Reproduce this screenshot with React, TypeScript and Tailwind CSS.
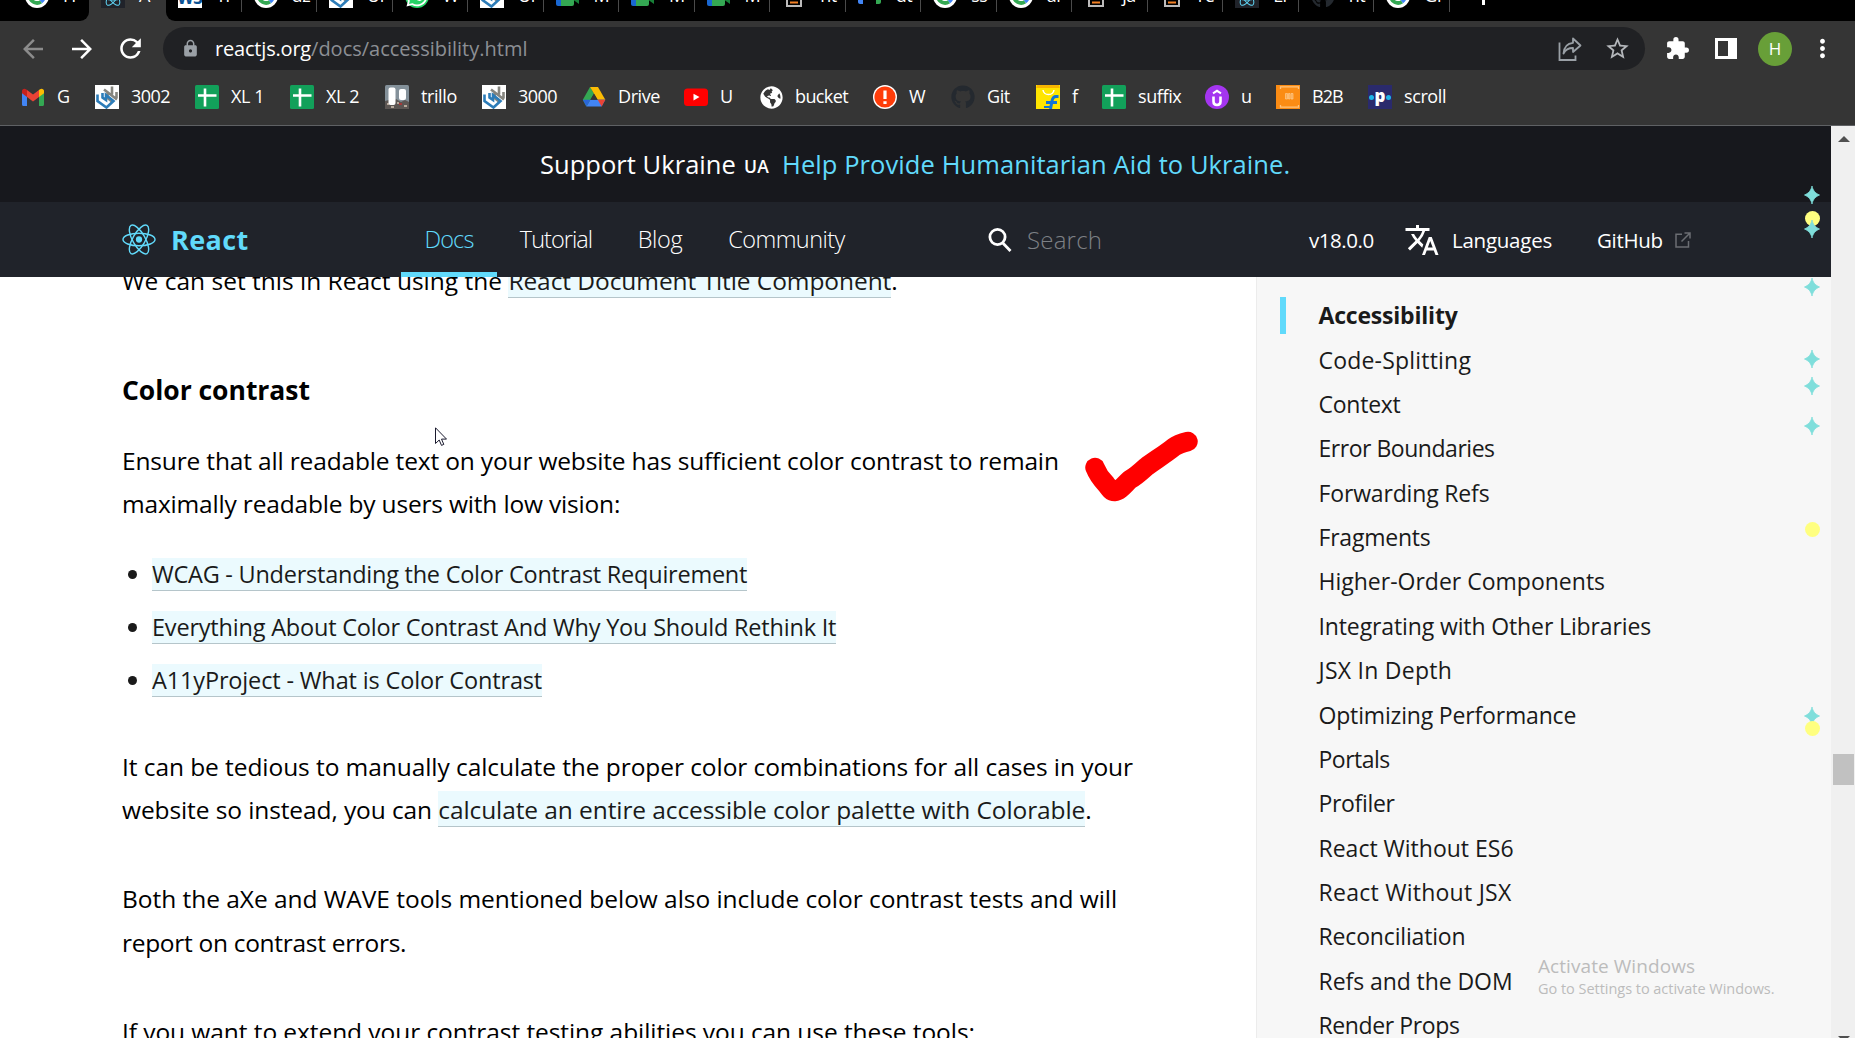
import type { ReactNode } from "react";
import {
  MdArrowBack,
  MdArrowForward,
  MdExtension,
  MdLock,
  MdMoreVert,
  MdRefresh,
  MdStarBorder,
  MdTranslate,
} from "react-icons/md";
import { FaGithub, FaGlobeAmericas, FaWhatsapp } from "react-icons/fa";

/* ---------- icons ---------- */

function ReactLogo({ className }: { className?: string }) {
  return (
    <svg viewBox="-12 -10.8 24 21.6" preserveAspectRatio="none" className={className} fill="none" stroke="#61dafb">
      <circle r="2.2" fill="#61dafb" stroke="none" />
      <ellipse rx="11.3" ry="4.4" strokeWidth="1" />
      <ellipse rx="11.3" ry="4.4" strokeWidth="1" transform="rotate(60)" />
      <ellipse rx="11.3" ry="4.4" strokeWidth="1" transform="rotate(120)" />
    </svg>
  );
}

function GmailIcon() {
  return (
    <svg viewBox="0 0 24 24" className="size-6">
      <path d="M1 7v12.5c0 .8.6 1.5 1.4 1.5H6V10.500z" fill="#4285f4" />
      <path d="M18 10.500V21h3.600c.8 0 1.400-.7 1.400-1.500V7z" fill="#34a853" />
      <path d="M18 5v7l5-3.800V6c0-2-2.300-3-4-1.800z" fill="#fbbc04" />
      <path d="M6 12V5l6 4.500L18 5v7l-6 4.500z" fill="#ea4335" />
      <path d="M1 6v2.200L6 12V5L5 4.200C3.300 3 1 4 1 6z" fill="#c5221f" />
    </svg>
  );
}

function InterlockIcon() {
  return (
    <svg viewBox="0 0 24 24" className="size-6 bg-white" fill="none" strokeWidth="2.600">
      <path d="M9 4.500 22 14.500M17 1.500v8M12.500 7.500v5.500l5 4M21.500 7v6" stroke="#85857f" />
      <path d="M2.500 9.500v6.500l9 6.500 7-6.500-7.500-6V15l-3.500-2.500V8" stroke="#2c7cb8" />
    </svg>
  );
}

function SheetIcon() {
  return (
    <svg viewBox="0 0 24 24" className="size-6">
      <rect width="24" height="24" rx="1.500" fill="#12a05a" />
      <path d="M10 3.500v18M3 10.500h18.500" stroke="#fff" strokeWidth="2.600" />
    </svg>
  );
}

function TrelloIcon() {
  return (
    <svg viewBox="0 0 24 24" className="size-6">
      <rect width="24" height="24" rx="1.500" fill="#84919a" />
      <path d="M0 16l4-1 3 3 4-4 5 3 4-2 4 2v7H0z" fill="#5c5653" />
      <path d="M2 19h2M6 22h3M12 18h2M19 21h3" stroke="#b7a99b" strokeWidth="2" />
      <path d="M14 19h3" stroke="#a33a3a" strokeWidth="2" />
      <rect x="3.500" y="2.500" width="7" height="17.500" rx="2" fill="#fff" />
      <rect x="14" y="4" width="7" height="11" rx="2" fill="#fff" />
    </svg>
  );
}

function DriveIcon() {
  return (
    <svg viewBox="0 0 24 24" className="size-6">
      <path d="M8 2 .8 14.800 4.400 21.500 12 8.600z" fill="#34a853" />
      <path d="M8 2h8l7.300 12.800h-7.600z" fill="#fbbc04" />
      <path d="M8.300 14.800h15L19.600 21.500H4.400z" fill="#4285f4" />
      <path d="M15.700 14.800h7.600L19.600 21.500z" fill="#ea4335" />
      <path d="M.8 14.800h7.500L4.400 21.500z" fill="#2a66d9" />
      <path d="M12 8.800l3.600 6H8.400z" fill="#353535" />
    </svg>
  );
}

function YouTubeIcon() {
  return (
    <svg viewBox="0 0 24 24" className="size-6">
      <rect y="3.500" width="24" height="17.500" rx="3.500" fill="#f00" />
      <path d="M9.500 8.800v6.600l6-3.300z" fill="#fff" />
    </svg>
  );
}

function AlertIcon() {
  return (
    <svg viewBox="0 0 24 24" className="size-6">
      <circle cx="12" cy="12" r="12" fill="#fff" />
      <circle cx="12" cy="12" r="10.600" fill="#ff3d0a" />
      <path d="M12 5.500v8.500M12 16.200v2.800" stroke="#fff" strokeWidth="3.200" />
    </svg>
  );
}

function ShopIcon() {
  return (
    <svg viewBox="0 0 24 24" className="size-6">
      <path d="M0 0h24v24H0z" fill="#ffe500" />
      <path d="M1 0h22l.8 3H.2z" fill="#f7b500" />
      <path d="M7 5c1 6 10 6 11 0" fill="none" stroke="#fff" strokeWidth="1.500" />
      <path d="M22.500 11.500H20c-2.500 0-3.500 2-4 4.500L14.500 24M10 17.500h11" fill="none" stroke="#1273d6" strokeWidth="3" />
      <path d="M8 22h6" stroke="#1273d6" strokeWidth="2" />
    </svg>
  );
}

function PurpleIcon() {
  return (
    <svg viewBox="0 0 24 24" className="size-6">
      <circle cx="12" cy="12" r="12" fill="#a435f0" />
      <path d="M8.500 11.500v5c0 4.600 7 4.600 7 0v-5" fill="none" stroke="#fff" strokeWidth="2.600" />
      <path d="M8 8.300 12 5.800l4 2.500" fill="none" stroke="#fff" strokeWidth="2" />
    </svg>
  );
}

function B2BIcon() {
  return (
    <svg viewBox="0 0 24 24" className="size-6">
      <rect width="24" height="24" fill="#fb8c14" />
      <path d="M4.500 4V1.800h18V4M4.500 20v2.200h18V20" fill="none" stroke="#ffc37d" strokeWidth="1.300" />
      <path d="M9.500 8.500h2v5.500h-2zM12.500 8.500h1.500v5.500h-1.500zM15 8.500h2v5.500h-2z" fill="#fda94e" stroke="#fed3a0" strokeWidth=".6" />
    </svg>
  );
}

function PIcon() {
  return (
    <span className="flex size-6 items-center justify-center gap-px bg-[#2a2a6c] font-bold text-white">
      <i className="size-[5px] rounded-full bg-[#1fb6e8]" />
      <b className="-mt-1 text-[17px] leading-none">p</b>
      <i className="size-[5px] rounded-full bg-[#1fb6e8]" />
    </span>
  );
}

function GoogleIcon() {
  return (
    <svg viewBox="0 0 24 24" className="size-6">
      <circle cx="12" cy="12" r="12" fill="#fff" />
      <path d="M5 12a7 7 0 0 0 11 5.700" fill="none" stroke="#34a853" strokeWidth="3.800" />
      <path d="M16 17.700A7 7 0 0 0 19 12h-7" fill="none" stroke="#4285f4" strokeWidth="3.800" />
    </svg>
  );
}

function MeetIcon() {
  return (
    <svg viewBox="0 0 24 24" className="size-6">
      <path d="M0 12h6v10H2a2 2 0 0 1-2-2z" fill="#1967d2" />
      <path d="M5 14h13v6a2 2 0 0 1-2 2H5z" fill="#34a853" />
      <path d="M16 12l7-3v11l-7-5z" fill="#188038" />
    </svg>
  );
}

function StackIcon() {
  return (
    <svg viewBox="0 0 24 24" className="size-6">
      <path d="M5 13v9h14v-9" fill="none" stroke="#bcbbbb" strokeWidth="2" />
      <path d="M8 18.500h8M8 14.500h8" stroke="#f48024" strokeWidth="2" />
    </svg>
  );
}

function GreenBlueIcon() {
  return (
    <svg viewBox="0 0 24 24" className="size-6">
      <path d="M0 8h5v12H2c-1 0-2-1-2-2z" fill="#4285f4" />
      <path d="M18 8h5v10c0 1-1 2-2 2h-3z" fill="#34a853" />
    </svg>
  );
}

function ReactFavicon() {
  return (
    <span className="flex size-6 items-center bg-[#20232a]">
      <ReactLogo className="h-5 w-6" />
    </span>
  );
}

function WsIcon() {
  return (
    <span className="flex size-6 items-end justify-center overflow-hidden bg-white text-[17px] leading-[20px] font-bold tracking-tight text-[#0b5394]">
      W3
    </span>
  );
}

function ShareIcon() {
  return (
    <svg viewBox="0 0 24 26" className="h-[26px] w-6" fill="none" stroke="#9aa0a6" strokeWidth="1.800">
      <path d="M1.500 6.500v17.500h16v-4.500" />
      <path d="M15 2.500 22.500 9.500 15 16v-4c-4.500 0-7.500 1.500-9.500 5.500C6 11 9.500 7.300 15 6.800z" strokeLinejoin="round" />
    </svg>
  );
}

function SparkMark({ className }: { className: string }) {
  return (
    <svg viewBox="0 0 16 18" className={"absolute left-0 h-[18px] w-4 " + className}>
      <path
        d="M8 0c.8 4 2.800 7 7.500 9-4.700 2-6.700 5-7.500 9-.8-4-2.800-7-7.500-9C5.200 7 7.200 4 8 0z"
        fill="#7fdedb"
        stroke="#7fdedb"
        strokeWidth=".8"
      />
    </svg>
  );
}

function DotMark({ className }: { className: string }) {
  return <span className={"absolute left-px size-[15px] rounded-full bg-[#ffff80] " + className} />;
}

/* ---------- browser chrome ---------- */

type Tab = { icon: ReactNode; title: string };

const github = <FaGithub className="size-6 text-[#24292f]" />;

const tabs: Tab[] = [
  { icon: <WsIcon />, title: "Tr" },
  { icon: <GoogleIcon />, title: "dz" },
  { icon: <InterlockIcon />, title: "Ur" },
  {
    icon: (
      <span className="flex size-6 items-center justify-center rounded-full bg-[#25d366]">
        <FaWhatsapp className="size-6 text-white" />
      </span>
    ),
    title: "W",
  },
  { icon: <InterlockIcon />, title: "Ur" },
  { icon: <MeetIcon />, title: "M" },
  { icon: <MeetIcon />, title: "M" },
  { icon: <MeetIcon />, title: "M" },
  { icon: <StackIcon />, title: "ht" },
  { icon: <GreenBlueIcon />, title: "dt" },
  { icon: <GoogleIcon />, title: "ss" },
  { icon: <GoogleIcon />, title: "ar" },
  { icon: <StackIcon />, title: "ja" },
  { icon: <StackIcon />, title: "re" },
  { icon: <ReactFavicon />, title: "LI" },
  { icon: github, title: "ht" },
  { icon: <GoogleIcon />, title: "Gr" },
];

function TabCell({ icon, title, divider }: Tab & { divider?: boolean }) {
  return (
    <div className={"flex h-3 w-[75.530px] shrink-0 items-end border-r " + (divider ? "border-[#4a4a4a]" : "border-transparent")}>
      <div className="mb-1 flex h-6 items-center gap-3.5 pl-3">
        <span className="shrink-0">{icon}</span>
        <span className="-mt-0.5 text-[18px] leading-6 tracking-[-0.4px]">{title}</span>
      </div>
    </div>
  );
}

function TabStrip() {
  return (
    <div className="flex h-[21px] shrink-0 overflow-hidden bg-[#353535] text-white">
      <div className="w-[89px] rounded-br-[9px] bg-black pl-[13px]">
        <TabCell icon={<GoogleIcon />} title="H" />
      </div>
      <div className="w-[77px]">
        <TabCell icon={<ReactFavicon />} title="A" />
      </div>
      <div className="flex flex-1 rounded-bl-[9px] bg-black">
        {tabs.map((t, i) => (
          <TabCell key={i} {...t} divider />
        ))}
        <div className="ml-[32px] h-[5px] w-[3px] bg-white" />
      </div>
    </div>
  );
}

function Toolbar() {
  return (
    <div className="flex h-[55px] shrink-0 items-center bg-[#353535] text-white">
      <MdArrowBack className="ml-[18px] size-[30px] text-[#8c8c8c]" />
      <MdArrowForward className="ml-[19px] size-[30px]" />
      <MdRefresh className="ml-[18px] size-[31px]" />
      <div className="ml-[17px] flex h-[43px] w-[1482px] items-center rounded-full bg-[#202124] pl-[18px]">
        <MdLock className="size-[19px] text-[#9aa0a6]" />
        <p className="ml-[15px] flex-1 text-[20px]">
          <span className="tracking-[-0.190px]">reactjs.org</span>
          <span className="text-[#8c8f94]">/docs/accessibility.html</span>
        </p>
        <ShareIcon />
        <MdStarBorder className="mr-[14px] ml-[22px] size-[27px] text-[#b4b7bb]" />
      </div>
      <MdExtension className="ml-[20px] size-[25px]" />
      <span className="ml-[25px] h-[21px] w-[22px] border-[3px] border-r-[9px] border-white" />
      <span className="ml-[21px] flex size-[34px] items-center justify-center rounded-full bg-[#689f38] text-[17px]">H</span>
      <MdMoreVert className="ml-[16px] size-[29px]" />
    </div>
  );
}

const bookmarks: { icon: ReactNode; label: string; box: string; text?: string }[] = [
  { icon: <GmailIcon />, label: "G", box: "w-[74px]" },
  { icon: <InterlockIcon />, label: "3002", box: "w-[100px]", text: "tracking-[-0.54px]" },
  { icon: <SheetIcon />, label: "XL 1", box: "w-[95px]" },
  { icon: <SheetIcon />, label: "XL 2", box: "w-[95px]" },
  { icon: <TrelloIcon />, label: "trillo", box: "w-[97px]" },
  { icon: <InterlockIcon />, label: "3000", box: "w-[100px]", text: "tracking-[-0.54px]" },
  { icon: <DriveIcon />, label: "Drive", box: "w-[102px]" },
  { icon: <YouTubeIcon />, label: "U", box: "w-[75px]" },
  { icon: <FaGlobeAmericas className="size-[23px] text-white" />, label: "bucket", box: "w-[114px]", text: "tracking-[-0.6px]" },
  { icon: <AlertIcon />, label: "W", box: "w-[78px]" },
  { icon: github, label: "Git", box: "w-[85px]" },
  { icon: <ShopIcon />, label: "f", box: "w-[66px]" },
  { icon: <SheetIcon />, label: "suffix", box: "w-[103px]" },
  { icon: <PurpleIcon />, label: "u", box: "w-[71px]" },
  { icon: <B2BIcon />, label: "B2B", box: "w-[92px]", text: "tracking-[-0.9px]" },
  { icon: <PIcon />, label: "scroll", box: "w-[110px]" },
];

function BookmarkBar() {
  return (
    <div className="flex h-[50px] shrink-0 border-b border-[#5f6164] bg-[#353535] pl-[21px] text-[18px] text-white">
      {bookmarks.map((b, i) => (
        <div key={i} className={"flex h-[42px] shrink-0 items-center gap-3 " + b.box}>
          <span className="flex w-6 shrink-0 justify-center">{b.icon}</span>
          <span className={"-mt-px whitespace-nowrap " + (b.text ?? "tracking-[-0.4px]")}>{b.label}</span>
        </div>
      ))}
    </div>
  );
}

/* ---------- page ---------- */

function Banner() {
  return (
    <div className="flex h-[76px] shrink-0 items-center bg-[#17181d] pl-[540px] text-[25.5px] whitespace-nowrap text-white">
      <span className="w-[196px] tracking-[0.04px]">Support Ukraine</span>
      <span className="mt-1 ml-[8px] w-[38px] text-[17.5px] font-semibold tracking-[0.2px]">UA</span>
      <span className="tracking-[0.08px] text-[#61dafb]">Help Provide Humanitarian Aid to Ukraine.</span>
    </div>
  );
}

const navLinks = [
  { label: "Docs", style: "w-[96px] tracking-[-0.9px] text-[#61dafb]", active: true },
  { label: "Tutorial", style: "w-[118px] tracking-[-0.95px]" },
  { label: "Blog", style: "w-[90px] tracking-[-0.4px]" },
  { label: "Community", style: "w-[163px] tracking-[-0.55px]" },
];

function NavBar() {
  return (
    <div className="flex h-[75px] shrink-0 items-center bg-[#20232a] pl-[122px] text-white">
      <ReactLogo className="h-[31px] w-[34px]" />
      <span className="mt-0.5 ml-[15px] w-[230px] text-[27px] font-bold tracking-[0.4px] text-[#61dafb]">React</span>
      {navLinks.map((l) => (
        <a key={l.label} className={"relative flex h-full items-center justify-center pt-px text-[23.500px] font-light " + l.style}>
          {l.label}
          {l.active && <span className="absolute inset-x-0 bottom-0 h-[5px] bg-[#61dafb]" />}
        </a>
      ))}
      <svg viewBox="0 0 24 24" className="ml-[120px] size-6" fill="none" stroke="#fff" strokeWidth="2.800">
        <circle cx="9.500" cy="9" r="7.600" />
        <path d="M14.800 15 22.500 23" />
      </svg>
      <span className="ml-[15px] w-[282px] text-[24px] font-light tracking-[0.2px] text-[#7d8085]">Search</span>
      <span className="mt-0.5 w-[95px] text-[20.500px] tracking-[-0.450px]">v18.0.0</span>
      <MdTranslate className="size-[36px]" />
      <span className="mt-0.5 ml-[12px] w-[145px] text-[20.500px] tracking-[-0.250px]">Languages</span>
      <span className="mt-0.5 w-[78px] text-[20.500px] tracking-[-0.3px]">GitHub</span>
      <svg viewBox="0 0 16 16" className="size-4" fill="none" stroke="#6b6e73" strokeWidth="1.500">
        <path d="M7 2.200H1V15h12.500V9M9.500 1H15v5.500M15 1 6.500 9.500" />
      </svg>
    </div>
  );
}

function Link({ children, className = "" }: { children: ReactNode; className?: string }) {
  return <a className={"border-b border-[#b5c5ca] bg-[#ebfafe] text-[#1a1a1a] " + className}>{children}</a>;
}

function Paragraph({ children, className }: { children: ReactNode; className: string }) {
  return <p className={"text-[24.500px] whitespace-nowrap text-black " + className}>{children}</p>;
}

const resources = [
  { label: "WCAG - Understanding the Color Contrast Requirement", style: "tracking-[-0.240px]" },
  { label: "Everything About Color Contrast And Why You Should Rethink It", style: "tracking-[-0.2px]" },
  { label: "A11yProject - What is Color Contrast", style: "tracking-[-0.150px]" },
];

function Article() {
  return (
    <article className="relative w-[1256px] shrink-0 overflow-hidden bg-white pl-[122px]">
      <Paragraph className="mt-[-18px] leading-[43px]">
        We can set this in React using the{" "}
        <Link className="tracking-[-0.070px]">React Document Title Component</Link>.
      </Paragraph>
      <h3 className="mt-[68px] text-[26.500px] leading-10 font-bold tracking-[-0.03px] text-black">Color contrast</h3>
      <Paragraph className="mt-[29px] leading-[43px]">
        <span className="block tracking-[-0.160px]">
          Ensure that all readable text on your website has sufficient color contrast to remain
        </span>
        <span className="block tracking-[-0.180px]">maximally readable by users with low vision:</span>
      </Paragraph>
      <ul className="mt-[23px]">
        {resources.map((r) => (
          <li key={r.label} className="flex h-[53px] items-center text-[23.500px] whitespace-nowrap">
            <span className="mr-[15px] ml-[6px] size-[9px] rounded-full bg-[#1a1a1a]" />
            <span>
              <Link className={r.style}>{r.label}</Link>
            </span>
          </li>
        ))}
      </ul>
      <Paragraph className="mt-[38px] leading-[43px]">
        <span className="block tracking-[-0.070px]">
          It can be tedious to manually calculate the proper color combinations for all cases in your
        </span>
        <span className="block tracking-[-0.1px]">
          website so instead, you can{" "}
          <Link className="pt-0.5 tracking-[-0.090px]">calculate an entire accessible color palette with Colorable</Link>.
        </span>
      </Paragraph>
      <Paragraph className="mt-[46px] leading-[44px]">
        <span className="block tracking-[-0.040px]">
          Both the aXe and WAVE tools mentioned below also include color contrast tests and will
        </span>
        <span className="block tracking-[-0.3px]">report on contrast errors.</span>
      </Paragraph>
      <Paragraph className="mt-[45px] leading-[43px] tracking-[-0.070px]">
        If you want to extend your contrast testing abilities you can use these tools:
      </Paragraph>

      {/* hand-drawn tick beside the first paragraph */}
      <svg viewBox="0 0 120 80" className="absolute top-[154px] left-[1082px] h-20 w-[120px]">
        <path
          d="M13 36.500C16 44 20 49 24 53c3 4 5 7.500 8.500 7.500C38 60 43 53 48 48.500c5-2.500 10-7 16-12.500 8-6 20-13.500 28-20 4-3 8-4 14-5.500"
          fill="none"
          stroke="#f00"
          strokeWidth="19.500"
          strokeLinecap="round"
          strokeLinejoin="round"
        />
      </svg>
      {/* pointer */}
      <svg viewBox="0 0 12 19" className="absolute top-[150px] left-[435px] h-[19px] w-3">
        <path d="M.5.8v15.700l3.700-3.500 2.300 5.400 2.300-1-2.300-5.300h5z" fill="#fff" stroke="#1a1a2e" strokeWidth="1" />
      </svg>
    </article>
  );
}

const sections = [
  { label: "Accessibility", style: "font-bold tracking-[-0.2px]", active: true },
  { label: "Code-Splitting", style: "tracking-[0.2px]" },
  { label: "Context", style: "tracking-[-0.250px]" },
  { label: "Error Boundaries", style: "tracking-[-0.470px]" },
  { label: "Forwarding Refs", style: "tracking-[-0.160px]" },
  { label: "Fragments", style: "tracking-[-0.220px]" },
  { label: "Higher-Order Components", style: "" },
  { label: "Integrating with Other Libraries", style: "tracking-[-0.120px]" },
  { label: "JSX In Depth", style: "tracking-[0.260px]" },
  { label: "Optimizing Performance", style: "tracking-[-0.170px]" },
  { label: "Portals", style: "tracking-[-0.5px]" },
  { label: "Profiler", style: "tracking-[-0.340px]" },
  { label: "React Without ES6", style: "" },
  { label: "React Without JSX", style: "tracking-[0.260px]" },
  { label: "Reconciliation", style: "tracking-[-0.160px]" },
  { label: "Refs and the DOM", style: "tracking-[-0.070px]" },
  { label: "Render Props", style: "tracking-[-0.390px]" },
];

function Sidebar() {
  return (
    <aside className="relative min-w-0 flex-1 overflow-hidden border-l border-[#ececec] bg-[#f7f7f7] pt-4">
      {sections.map((s) => (
        <div key={s.label} className="flex h-[44.375px] items-center pl-[23px] text-[23px] text-[#1a1a1a]">
          <span className={"mr-[32.5px] h-[37px] w-[6px] " + (s.active ? "bg-[#61dafb]" : "")} />
          <span className={"mt-[0.5px] whitespace-nowrap " + s.style}>{s.label}</span>
        </div>
      ))}
      <div className="absolute top-[676px] left-[281px] whitespace-nowrap text-[#bcbcbc]">
        <p className="text-[19px] leading-[26px] tracking-[0.070px]">Activate Windows</p>
        <p className="text-[14.500px] leading-[19px] tracking-[-0.030px]">Go to Settings to activate Windows.</p>
      </div>
    </aside>
  );
}

function ScrollBar() {
  return (
    <div className="relative w-6 shrink-0 bg-[#f0f0f0]">
      <span className="absolute top-[10px] left-[7px] border-x-[6px] border-b-[6px] border-x-transparent border-b-[#505050]" />
      <span className="absolute top-[628px] left-[2px] h-[31px] w-[21px] bg-[#c1c1c1]" />
      <span className="absolute top-[910px] left-[7px] border-x-[6px] border-t-[6px] border-x-transparent border-t-[#505050]" />
    </div>
  );
}

export default function App() {
  return (
    <div className="flex h-[1038px] w-full flex-col overflow-hidden bg-white font-['Open_Sans','Noto_Sans',sans-serif]">
      <TabStrip />
      <Toolbar />
      <BookmarkBar />
      <div className="flex min-h-0 flex-1 overflow-hidden">
        <div className="relative flex min-w-0 flex-1 flex-col">
          <Banner />
          <NavBar />
          <main className="flex min-h-0 flex-1 overflow-hidden">
            <Article />
            <Sidebar />
          </main>
          {/* page markers along the right edge */}
          <div className="absolute inset-y-0 right-[11px] w-4">
            <SparkMark className="top-[60px]" />
            <DotMark className="top-[85px]" />
            <SparkMark className="top-[94px]" />
            <SparkMark className="top-[152px]" />
            <SparkMark className="top-[224px]" />
            <SparkMark className="top-[251px]" />
            <SparkMark className="top-[291px]" />
            <DotMark className="top-[396px]" />
            <SparkMark className="top-[581px]" />
            <DotMark className="top-[595px]" />
          </div>
        </div>
        <ScrollBar />
      </div>
    </div>
  );
}
